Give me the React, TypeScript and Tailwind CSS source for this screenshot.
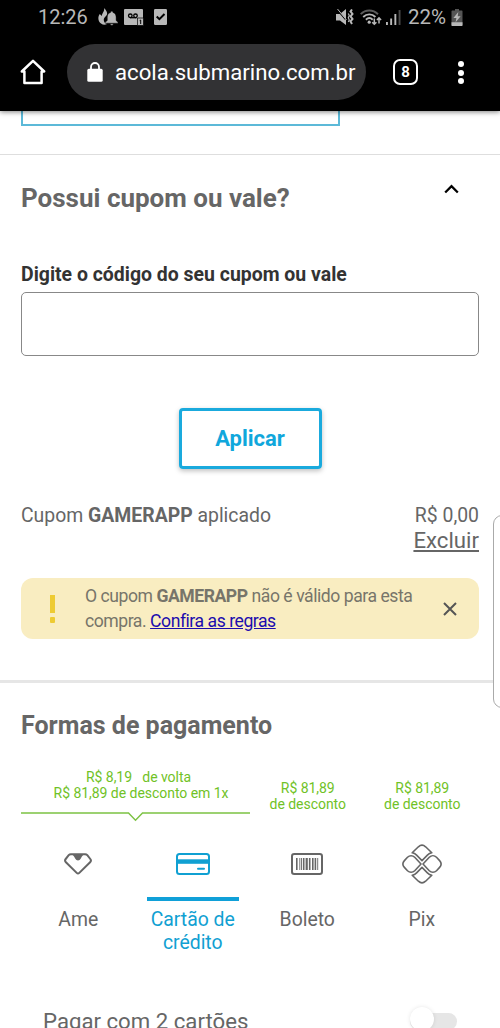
import React, { useState } from 'react';

interface IconProps {
  className?: string;
}

const AlertsIcon: React.FC<IconProps> = ({ className }) => (
  <svg viewBox="0 0 20 18" className={className} fill="currentColor">
    <path d="M6 0C7 3 4 5 3.700 8L1.800 6C-.5 9 0 13.500 3 15.500c2 1.400 4 1.500 6 .500-2.500-1-3.800-2.800-3-5.500C6.500 9 8.500 8 9 6.500 9.500 4 8 2 6 0z" />
    <path
      d="M13.800 3.200c-.8 0-1.200.5-1.200 1.200C10 5.100 9.300 7.200 9.300 9.500v3L7.200 14.300v.9h12.800v-.9l-1.900-1.800v-3c0-2.300-.7-4.400-3.200-5.100 0-.7-.3-1.200-1.100-1.200zM12.300 15.800h3c0 1-.6 1.500-1.500 1.500s-1.500-.5-1.500-1.500z"
      stroke="#000"
      strokeWidth="0.400"
    />
  </svg>
);

const VoicemailIcon: React.FC<IconProps> = ({ className }) => (
  <svg viewBox="0 0 20 17" className={className}>
    <path fill="currentColor" d="M1 0h17a1 1 0 0 1 1 1v8h-5v7H1a1 1 0 0 1-1-1V1a1 1 0 0 1 1-1z" />
    <g fill="none" stroke="#000" strokeWidth="1.300">
      <circle cx="6.300" cy="6.800" r="1.800" />
      <circle cx="11.500" cy="6.800" r="1.800" />
      <path d="M6 8.700h6.500" />
    </g>
    <path fill="currentColor" stroke="#000" strokeWidth=".7" d="M13.500 9h6v7.500h-6z" />
    <path fill="none" stroke="#000" strokeWidth="1" d="M15.700 11.600l1-.6v4" />
  </svg>
);

const CheckBadgeIcon: React.FC<IconProps> = ({ className }) => (
  <svg viewBox="0 0 13 16" className={className}>
    <rect width="13" height="16" rx="1.200" fill="currentColor" />
    <path d="M2.700 7.500l2.700 2.700L10.500 5" fill="none" stroke="#000" strokeWidth="2" />
  </svg>
);

const VibrateIcon: React.FC<IconProps> = ({ className }) => (
  <svg viewBox="0 0 18 17" className={className}>
    <path fill="currentColor" d="M0 5h4l6-5v16l-6-4.500H0z" />
    <path d="M.5 0l9 10.500" stroke="#000" strokeWidth="1.200" />
    <path d="M1.500 0l9 11" stroke="currentColor" strokeWidth="1" />
    <path
      fill="none"
      stroke="currentColor"
      strokeWidth="2"
      d="M16 .5l-1.500 2 2 2.400-2 2.500 2 2.500-2 2.500 1.500 2.600"
    />
    <path fill="none" stroke="currentColor" strokeWidth="1.200" d="M12.300 4.500l1 2-1 2.300 1 2.300-1 1.800" />
  </svg>
);

const WifiIcon: React.FC<IconProps> = ({ className }) => (
  <svg viewBox="0 0 22 17" className={className} fill="none" stroke="currentColor">
    <g strokeWidth="1.900">
      <path d="M.6 5.200C5.500.3 13 .3 18 5.200" opacity=".5" />
      <path d="M3.200 8c3.600-3.500 8.700-3.500 12.200 0M5.900 10.700c2-1.900 4.800-1.900 6.800 0" />
    </g>
    <circle cx="9.200" cy="13.200" r="1.600" fill="currentColor" stroke="none" />
    <path strokeWidth="1.500" d="M14.300 9.500v5.700M12.200 13.200l2.100 2.100 2.100-2.100M19 14.500V9M16.900 11L19 8.900l2.100 2.100" />
  </svg>
);

const SignalIcon: React.FC<IconProps> = ({ className }) => (
  <svg viewBox="0 0 15 16" className={className} fill="currentColor">
    <path d="M0 13h1.900v3H0zM4.200 9.500h1.900V16H4.200zM8.400 5h1.900v11H8.400z" />
    <path d="M12.600 1h1.900v15h-1.900z" opacity=".4" />
  </svg>
);

const BatteryIcon: React.FC<IconProps> = ({ className }) => (
  <svg viewBox="0 0 12 17" className={className}>
    <path fill="#555" d="M4 0h4v1.500h2.500c.8 0 1 .4 1 1V16c0 .6-.4 1-1 1h-9c-.6 0-1-.4-1-1V2.500c0-.6.400-1 1-1H4z" />
    <path fill="currentColor" d="M.5 13.200h11V16c0 .6-.4 1-1 1h-9c-.6 0-1-.4-1-1zM7.300 3L2.400 9h3L4.600 13.200 9.600 7.300H6.700z" />
  </svg>
);

const HomeIcon: React.FC<IconProps> = ({ className }) => (
  <svg viewBox="0 0 26 26" className={className} fill="none" stroke="currentColor" strokeWidth="2.500" strokeLinejoin="round" strokeLinecap="round">
    <path d="M1.800 12.500L13 1.800l11.200 10.700h-2.600V24H4.400V12.500z" />
  </svg>
);

const LockIcon: React.FC<IconProps> = ({ className }) => (
  <svg viewBox="0 0 16 20" className={className}>
    <rect x="0.300" y="6.800" width="15.400" height="13" rx="1.600" fill="currentColor" />
    <path d="M4 8V5a4 4 0 0 1 8 0v3" fill="none" stroke="currentColor" strokeWidth="1.800" />
  </svg>
);

const AmeIcon: React.FC<IconProps> = ({ className }) => (
  <svg viewBox="0 0 28 22" className={className}>
    <path
      d="M7 1.200h14a3 3 0 0 1 2.300 1l3 3.800c.9 1.100.8 2.200-.2 3.200L15.300 19.900c-.8.8-1.800.8-2.600 0L1.900 9.200C.9 8.200.8 7.100 1.700 6l3-3.800a3 3 0 0 1 2.300-1z"
      fill="none"
      stroke="currentColor"
      strokeWidth="2"
    />
    <path d="M7 1h14c-1.800.3-2.800 2-4.200 4.500-1.300 2.600-4.300 2.600-5.600 0C9.800 3 8.800 1.300 7 1z" fill="currentColor" />
  </svg>
);

const CardIcon: React.FC<IconProps> = ({ className }) => (
  <svg viewBox="0 0 34 22" className={className}>
    <rect x="1" y="1" width="32" height="20" rx="2.500" fill="none" stroke="currentColor" strokeWidth="2" />
    <path d="M1 6.300h32v4.500H1z" fill="currentColor" />
    <path d="M22 15.800h6" stroke="currentColor" strokeWidth="2" strokeLinecap="round" />
  </svg>
);

const BoletoIcon: React.FC<IconProps> = ({ className }) => (
  <svg viewBox="0 0 32 22" className={className} fill="none" stroke="currentColor">
    <rect x="1" y="1" width="30" height="20" rx="2.200" strokeWidth="2" />
    <path strokeWidth="1.600" d="M5.800 5v12M12.700 5v12M18.700 5v12M21.800 5v12M24.400 5v12" />
    <path strokeWidth=".9" d="M8.800 5v12M10.500 5v12M26.700 5v12" />
    <path strokeWidth="2.200" d="M15.700 5v12" />
  </svg>
);

const PixIcon: React.FC<IconProps> = ({ className }) => (
  <svg viewBox="0 0 40 40" className={className} fill="none" stroke="currentColor" strokeWidth="1.600" strokeLinejoin="round">
    <path d="M10.200 8.800l6.200-6c2.400-2.200 4.800-2.200 7.200 0l6.200 6c-1.900.3-3.100 1-4.400 2.300L20 16.600l-5.400-5.500c-1.300-1.300-2.500-2-4.400-2.300z" />
    <path d="M10.200 31.200l6.200 6c2.400 2.200 4.800 2.200 7.200 0l6.200-6c-1.900-.3-3.100-1-4.400-2.300L20 23.400l-5.400 5.500c-1.300 1.300-2.500 2-4.400 2.300z" />
    <path d="M19 20l-6.300-6.700c-2.100-2.100-5.100-2.100-7.200 0L2.400 16.600c-2 2.200-2 4.600 0 6.800l3.100 3.300c2.100 2.100 5.100 2.100 7.200 0z" />
    <path d="M21 20l6.300-6.700c2.100-2.100 5.100-2.100 7.200 0l3.100 3.300c2 2.200 2 4.600 0 6.800l-3.100 3.300c-2.100 2.100-5.100 2.100-7.200 0z" />
  </svg>
);

const StatusBar: React.FC = () => (
  <div className="flex h-[34px] items-center pl-[38px] pr-[37px] text-[20px] text-[#b8b8b8]">
    <span className="w-[51px] whitespace-nowrap">12:26</span>
    <AlertsIcon className="ml-[9px] h-[18px] w-5" />
    <VoicemailIcon className="ml-[6px] h-[17px] w-5" />
    <CheckBadgeIcon className="ml-[10px] h-4 w-[13px]" />
    <div className="ml-auto flex items-center">
      <VibrateIcon className="h-[17px] w-[18px]" />
      <WifiIcon className="ml-[6px] h-[17px] w-[22px]" />
      <SignalIcon className="ml-[4px] h-4 w-[15px]" />
      <span className="ml-[7px] w-[38px] whitespace-nowrap text-[20.500px]">22%</span>
      <BatteryIcon className="ml-[5px] h-[17px] w-3" />
    </div>
  </div>
);

const BrowserBar: React.FC = () => (
  <div className="flex h-[77px] items-start pl-5 pt-[10px] text-white">
    <HomeIcon className="mt-[15px] h-[26px] w-[26px]" />
    <div className="ml-[21px] flex h-14 w-[299px] items-center rounded-full bg-[#323234] pl-5">
      <LockIcon className="h-5 w-4" />
      <span className="ml-[12px] mt-[2px] whitespace-nowrap text-[22.200px]">acola.submarino.com.br</span>
    </div>
    <div className="ml-[27px] mt-[15px] flex h-[26px] w-[25px] items-center justify-center rounded-[7px] border-[2.500px] border-white text-[15px] font-bold">
      8
    </div>
    <div className="ml-10 mt-[17px] flex flex-col gap-[2.500px]">
      <span className="size-[6px] rounded-full bg-white" />
      <span className="size-[6px] rounded-full bg-white" />
      <span className="size-[6px] rounded-full bg-white" />
    </div>
  </div>
);

const CouponSection: React.FC = () => {
  const [code, setCode] = useState('');

  return (
    <section className="h-[526px] border-t border-[#dedede] px-[21px]">
      <div className="flex items-start justify-between pr-5 pt-[27px]">
        <h2 className="whitespace-nowrap text-[26px] font-bold leading-8 text-[#666]">Possui cupom ou vale?</h2>
        <svg viewBox="0 0 15 10" className="mt-[2px] h-[10px] w-[15px]" fill="none" stroke="#000" strokeWidth="2.300">
          <path d="M1.200 8.500l6.300-6.300 6.300 6.300" />
        </svg>
      </div>

      <label htmlFor="coupon" className="mt-[49px] block whitespace-nowrap text-[19.450px] font-bold leading-6 text-[#333]">
        Digite o código do seu cupom ou vale
      </label>
      <input
        id="coupon"
        value={code}
        onChange={(e) => setCode(e.target.value)}
        className="mt-[5px] block h-16 w-full rounded-[5px] border border-[#888] px-4 outline-none"
      />

      <button className="mx-auto mt-[52px] block h-[61px] w-[143px] rounded-[4px] border-[3px] border-[#1aaadd] text-[22px] font-bold text-[#10a7dc] shadow-[0_2px_5px_rgba(0,0,0,0.25)]">
        Aplicar
      </button>

      <div className="mt-[34px] flex items-start justify-between text-[19.400px] leading-[25px] text-[#666]">
        <p className="whitespace-nowrap">
          Cupom <b>GAMERAPP</b> aplicado
        </p>
        <div className="flex flex-col items-end">
          <span>R$ 0,00</span>
          <a className="text-[22.200px] underline">Excluir</a>
        </div>
      </div>

      <div className="mt-[25px] flex h-[61px] items-center rounded-xl bg-[#f9edc1] pl-7 pr-[22px]">
        <div className="flex w-[7px] flex-col items-center gap-1">
          <span className="h-[18px] w-[5px] bg-[#eecb33]" />
          <span className="h-[6px] w-[5px] rounded-[1px] bg-[#eecb33]" />
        </div>
        <p className="ml-[29px] whitespace-nowrap text-[17.600px] leading-[25px] tracking-[-0.460px] text-[#77756a]">
          O cupom <b>GAMERAPP</b> não é válido para esta
          <br />
          compra. <a className="text-[#1c0cae] underline">Confira as regras</a>
        </p>
        <svg viewBox="0 0 14 14" className="ml-auto h-[14px] w-[14px]" stroke="#555" strokeWidth="2">
          <path d="M1 1l12 12M13 1L1 13" />
        </svg>
      </div>
    </section>
  );
};

interface MethodProps {
  label: React.ReactNode;
  icon: React.ReactNode;
  active?: boolean;
}

const PaymentMethod: React.FC<MethodProps> = ({ label, icon, active }) => (
  <button className={`flex flex-col items-center text-[19.400px] leading-[23px] ${active ? 'text-[#10a0d2]' : 'text-[#666]'}`}>
    <span className="flex h-[42px] items-center">{icon}</span>
    <span className={`mt-[12px] h-[4px] w-[92px] ${active ? 'bg-[#10a0d8]' : ''}`} />
    <span className="mt-[7px] whitespace-nowrap">{label}</span>
  </button>
);

const PaymentSection: React.FC = () => (
  <section className="border-t-[3px] border-[#e6e6e6] px-[21px]">
    <h2 className="mt-[27px] whitespace-nowrap text-[25px] font-bold leading-8 text-[#666]">Formas de pagamento</h2>

    <div className="mt-[27px] grid h-[53px] grid-cols-4 text-center text-[14px] leading-[16px] tracking-[-0.040px] text-[#70c226]">
      <div className="col-span-2">
        <p className="whitespace-nowrap pl-[6px]">
          R$ 8,19 &nbsp;&nbsp;de volta
        </p>
        <p className="whitespace-nowrap pl-[11px]">R$ 81,89 de desconto em 1x</p>
        <svg viewBox="0 0 229 10" className="mt-[11px] h-[10px] w-[229px]" fill="none" stroke="#7cc243" strokeWidth="1.400">
          <path d="M0 1h107.500l7 7.200 7-7.200H229" />
        </svg>
      </div>
      <p className="pt-[11px] pl-px">
        R$ 81,89
        <br />
        de desconto
      </p>
      <p className="pt-[11px] pl-px">
        R$ 81,89
        <br />
        de desconto
      </p>
    </div>

    <div className="mt-[21px] grid h-[110px] grid-cols-4 items-start">
      <PaymentMethod label="Ame" icon={<AmeIcon className="h-[22px] w-7" />} />
      <PaymentMethod label={<>Cartão de<br />crédito</>} icon={<CardIcon className="h-[22px] w-[34px]" />} active />
      <PaymentMethod label="Boleto" icon={<BoletoIcon className="h-[22px] w-8" />} />
      <PaymentMethod label="Pix" icon={<PixIcon className="h-10 w-10" />} />
    </div>

    <div className="mt-[54px] flex items-start justify-between pl-[22px] pr-[22px]">
      <span className="whitespace-nowrap text-[22.200px] leading-7 text-[#666]">Pagar com 2 cartões</span>
      <div className="relative mt-[6px] h-[17px] w-[47px] rounded-full bg-[#e6e6e6]">
        <span className="absolute left-0 -top-[6px] size-6 rounded-full bg-white shadow-[0_0_4px_rgba(0,0,0,0.1)]" />
      </div>
    </div>
  </section>
);

const App: React.FC = () => {
  return (
    <div className="relative flex h-[1028px] w-[500px] flex-col overflow-hidden bg-white font-['Roboto',sans-serif]">
      <header className="z-10 h-[111px] shrink-0 bg-black shadow-[0_1px_5px_rgba(0,0,0,0.5)]">
        <StatusBar />
        <BrowserBar />
      </header>

      <main className="min-h-0 flex-1 overflow-hidden">
        <div className="ml-[21px] h-[15px] w-[319px] border-x-2 border-b-2 border-[#5cb9d8]" />
        <div className="h-[28px]" />
        <CouponSection />
        <PaymentSection />
      </main>

      {/* edge panel handle */}
      <div className="absolute left-[493px] top-[515px] h-[193px] w-5 rounded-[9px] border border-[#aaa] bg-white" />
    </div>
  );
};

export default App;
